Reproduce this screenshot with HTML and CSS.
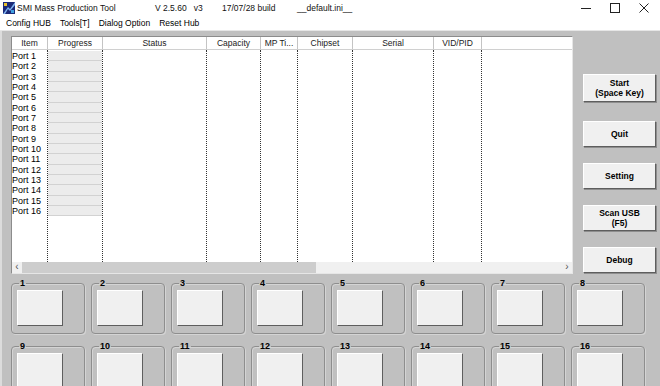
FILE: index.html
```html
<!DOCTYPE html>
<html lang="en">
<head>
    <meta charset="UTF-8">
    <title>SMI Mass Production Tool</title>
    <link rel="stylesheet" href="styles.css">
</head>
<body>
    <!-- title bar -->
    <div class="titlebar">
        <svg class="app-icon" width="12" height="12" viewBox="0 0 12 12">
            <rect width="12" height="12" fill="#1b2a78"/>
            <path d="M0 12 L5 5 L7 7 L12 0 L12 3 L7 9 L5 7 L2 12 Z" fill="#7fb4f0"/>
            <rect x="1" y="1" width="3" height="3" fill="#e8c02a"/>
            <rect x="8" y="8" width="3" height="3" fill="#3fa0e0"/>
        </svg>
        <span class="t-name">SMI Mass Production Tool</span>
        <span class="t-ver">V 2.5.60&nbsp;&nbsp;&nbsp;v3</span>
        <span class="t-build">17/07/28 build</span>
        <span class="t-ini">__default.ini__</span>
        <div class="win-ctrls">
            <div class="win-btn">
                <svg width="10" height="10" viewBox="0 0 10 10"><line x1="0" y1="5.5" x2="10" y2="5.5" stroke="#222" stroke-width="1"/></svg>
            </div>
            <div class="win-btn">
                <svg width="10" height="10" viewBox="0 0 10 10"><rect x="0.5" y="0.5" width="9" height="9" fill="none" stroke="#222" stroke-width="1"/></svg>
            </div>
            <div class="win-btn">
                <svg width="10" height="10" viewBox="0 0 10 10"><path d="M0.5 0.5 L9.5 9.5 M9.5 0.5 L0.5 9.5" stroke="#222" stroke-width="1"/></svg>
            </div>
        </div>
    </div>

    <!-- menu -->
    <div class="menubar">
        <span>Config HUB</span>
        <span>Tools[T]</span>
        <span>Dialog Option</span>
        <span>Reset Hub</span>
    </div>

    <div class="main">
        <div class="top">
            <!-- port list -->
            <div class="list">
                <div class="list-head">
                    <div class="col c1">Item</div>
                    <div class="col c2">Progress</div>
                    <div class="col c3">Status</div>
                    <div class="col c4">Capacity</div>
                    <div class="col c5">MP Ti...</div>
                    <div class="col c6">Chipset</div>
                    <div class="col c7">Serial</div>
                    <div class="col c8">VID/PID</div>
                    <div class="col c9"></div>
                </div>
                <div class="list-body">
                    <div class="col c1">
                        <div class="row">Port 1</div>
                        <div class="row">Port 2</div>
                        <div class="row">Port 3</div>
                        <div class="row">Port 4</div>
                        <div class="row">Port 5</div>
                        <div class="row">Port 6</div>
                        <div class="row">Port 7</div>
                        <div class="row">Port 8</div>
                        <div class="row">Port 9</div>
                        <div class="row">Port 10</div>
                        <div class="row">Port 11</div>
                        <div class="row">Port 12</div>
                        <div class="row">Port 13</div>
                        <div class="row">Port 14</div>
                        <div class="row">Port 15</div>
                        <div class="row">Port 16</div>
                    </div>
                    <div class="col c2">
                        <div class="bar"></div><div class="bar"></div><div class="bar"></div><div class="bar"></div>
                        <div class="bar"></div><div class="bar"></div><div class="bar"></div><div class="bar"></div>
                        <div class="bar"></div><div class="bar"></div><div class="bar"></div><div class="bar"></div>
                        <div class="bar"></div><div class="bar"></div><div class="bar"></div><div class="bar"></div>
                    </div>
                    <div class="col c3"></div>
                    <div class="col c4"></div>
                    <div class="col c5"></div>
                    <div class="col c6"></div>
                    <div class="col c7"></div>
                    <div class="col c8"></div>
                    <div class="col c9"></div>
                </div>
                <div class="hscroll">
                    <div class="arrow">&lsaquo;</div>
                    <div class="thumb"></div>
                    <div class="track"></div>
                    <div class="arrow">&rsaquo;</div>
                </div>
            </div>

            <!-- buttons -->
            <div class="side">
                <div class="btn btn-start">Start<br>(Space Key)</div>
                <div class="btn">Quit</div>
                <div class="btn">Setting</div>
                <div class="btn">Scan USB<br>(F5)</div>
                <div class="btn">Debug</div>
            </div>
        </div>

        <!-- port boxes -->
        <div class="ports">
            <fieldset class="port"><legend>1</legend><div class="slot"></div></fieldset>
            <fieldset class="port"><legend>2</legend><div class="slot"></div></fieldset>
            <fieldset class="port"><legend>3</legend><div class="slot"></div></fieldset>
            <fieldset class="port"><legend>4</legend><div class="slot"></div></fieldset>
            <fieldset class="port"><legend>5</legend><div class="slot"></div></fieldset>
            <fieldset class="port"><legend>6</legend><div class="slot"></div></fieldset>
            <fieldset class="port"><legend>7</legend><div class="slot"></div></fieldset>
            <fieldset class="port"><legend>8</legend><div class="slot"></div></fieldset>
            <fieldset class="port"><legend>9</legend><div class="slot"></div></fieldset>
            <fieldset class="port"><legend>10</legend><div class="slot"></div></fieldset>
            <fieldset class="port"><legend>11</legend><div class="slot"></div></fieldset>
            <fieldset class="port"><legend>12</legend><div class="slot"></div></fieldset>
            <fieldset class="port"><legend>13</legend><div class="slot"></div></fieldset>
            <fieldset class="port"><legend>14</legend><div class="slot"></div></fieldset>
            <fieldset class="port"><legend>15</legend><div class="slot"></div></fieldset>
            <fieldset class="port"><legend>16</legend><div class="slot"></div></fieldset>
        </div>
    </div>
</body>
</html>
```

FILE: styles.css
```css
/* base */
html, body {
    margin: 0;
    padding: 0;
    width: 660px;
    height: 386px;
    overflow: hidden;
}

body {
    font-family: 'Liberation Sans', Arial, sans-serif;
    color: #000;
    background: #c0c0c0;
}

/* title bar */
.titlebar {
    height: 16px;
    background: #fff;
    display: flex;
    align-items: center;
    font-size: 8.5px;
    color: #111;
}

.app-icon {
    margin-left: 3px;
    margin-right: 2px;
    flex-shrink: 0;
}

.t-name { width: 138px; }
.t-ver { width: 67px; }
.t-build { width: 75px; }

.win-ctrls {
    margin-left: auto;
    margin-right: 2px;
    display: flex;
}

.win-btn {
    width: 29px;
    height: 16px;
    display: flex;
    align-items: center;
    justify-content: center;
}

/* menu */
.menubar {
    height: 14px;
    background: #fff;
    display: flex;
    align-items: center;
    gap: 9px;
    padding-left: 6px;
    font-size: 8.5px;
    border-bottom: 1px solid #e6e6e6;
}

/* main area */
.main {
    border-left: 2px solid #dcdcdc;
    padding: 5px 0 0 9px;
}

.top {
    display: flex;
    height: 238px;
}

/* port list */
.list {
    width: 562px;
    height: 238px;
    box-sizing: border-box;
    border: 1px solid;
    border-color: #8c8c8c #e6e6e6 #e6e6e6 #8c8c8c;
    background: #fff;
    display: flex;
    flex-direction: column;
}

.list-head {
    display: flex;
    height: 13px;
    box-sizing: border-box;
    border-bottom: 1px solid #d0d0d0;
    font-size: 8.5px;
    line-height: 12px;
    color: #222;
}

.list-head .col {
    border-right: 1px solid #c4c4c4;
    text-align: center;
}

.list-head .c9 {
    border-right: none;
}

.col {
    box-sizing: border-box;
    flex-shrink: 0;
}

.c1 { width: 36px; }
.c2 { width: 55px; }
.c3 { width: 104px; }
.c4 { width: 54px; }
.c5 { width: 37px; }
.c6 { width: 55px; }
.c7 { width: 81px; }
.c8 { width: 48px; }
.c9 { flex: 1; }

.list-body {
    flex: 1;
    display: flex;
}

.list-body .col {
    border-right: 1px dotted #333;
    padding-top: 1px;
}

.list-body .c9 {
    border-right: none;
}

.row {
    height: 10.33px;
    font-size: 9px;
    line-height: 11px;
    white-space: nowrap;
}

.bar {
    height: 9.33px;
    background: #ececec;
    border-bottom: 1px solid #d2d2d2;
}

/* horizontal scrollbar */
.hscroll {
    height: 11px;
    display: flex;
    background: #f0f0f0;
}

.hscroll .arrow {
    width: 10px;
    font-size: 10px;
    line-height: 10px;
    text-align: center;
    color: #555;
}

.hscroll .thumb {
    width: 294px;
    background: #cdcdcd;
}

.hscroll .track {
    flex: 1;
}

/* side buttons */
.side {
    margin-left: 10px;
    padding-top: 38px;
    width: 73px;
    display: flex;
    flex-direction: column;
    gap: 16px;
}

.btn {
    height: 26px;
    box-sizing: border-box;
    background: #f0f0f0;
    border: 1px solid;
    border-color: #fff #5e5e5e #5e5e5e #fff;
    box-shadow: 1px 1px 0 #8e8e8e;
    display: flex;
    align-items: center;
    justify-content: center;
    text-align: center;
    font-size: 8.5px;
    font-weight: bold;
    line-height: 10px;
}

.btn-start {
    height: 28px;
    margin-bottom: 3px;
}

/* port boxes */
.ports {
    margin-top: 4px;
    display: grid;
    grid-template-columns: repeat(8, 74px);
    column-gap: 6px;
    row-gap: 7px;
}

.port {
    margin: 0;
    padding: 2px 6px 7px 5px;
    min-width: 0;
    border: 1px solid #8e8e8e;
    border-radius: 4px;
    box-shadow: inset 1px 1px 0 #d4d4d4, 1px 1px 0 #d4d4d4;
}

.port legend {
    margin-left: 2px;
    padding: 0 1px;
    font-size: 9px;
    font-weight: bold;
    line-height: 10px;
}

.slot {
    width: 46px;
    height: 36px;
    box-sizing: border-box;
    background: #f0f0f0;
    border: 1px solid;
    border-color: #fff #5e5e5e #5e5e5e #fff;
}
```
